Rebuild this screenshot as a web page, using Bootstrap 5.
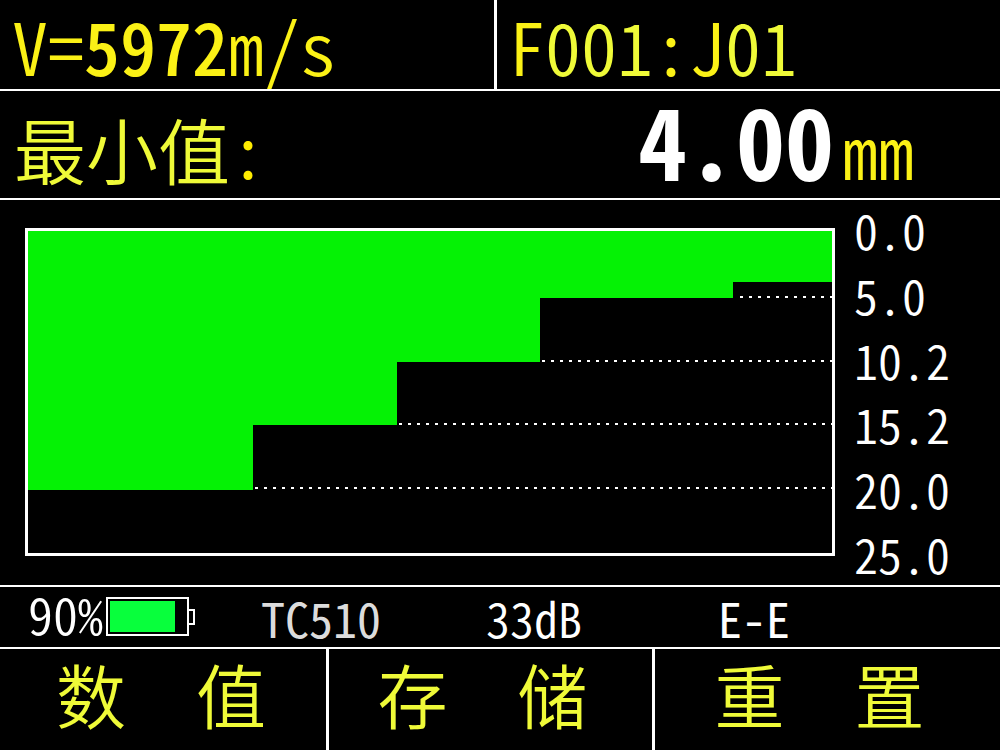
<!DOCTYPE html>
<html lang="zh-CN">
<head>
<meta charset="utf-8">
<meta name="viewport" content="width=device-width, initial-scale=1">
<title>TC510</title>
<link href="https://cdn.jsdelivr.net/npm/bootstrap@5.3.0/dist/css/bootstrap.min.css" rel="stylesheet">
<style>
  body { background: #000; color: #fff; font-family: "Noto Sans CJK SC", sans-serif; font-weight: 350; }
  /* half-width Latin forms give every digit and letter the same advance */
  .mono { font-feature-settings: "hwid" 1; white-space: nowrap; }
  .line-b { border-bottom: 2px solid #fff; }
  .top-row { display: grid; grid-template-columns: 497fr 503fr; }
  .readout { font-size: 72px; line-height: 89px; color: #fbf116; padding-left: 12px; }
  .velocity { border-right: 3px solid #fff; }
  .readout b { font-weight: 500; }
  .lime { color: #effa38; }
  .value-row { padding: 0 86px 0 14px; }
  .value-label { font-size: 72px; line-height: 107px; padding-top: 3px; margin-bottom: -3px; color: #effa38; }
  .value-num { font-size: 98px; line-height: 95px; font-weight: 700; }
  .value-unit { font-size: 72px; line-height: 107px; padding-top: 4px; margin: 0 0 -4px 8px; color: #fbf116; }
  .amber { color: #ffec00; }
  .chart-row { padding: 5px 46px 8px 25px; }
  .plot { border: 3px solid #fff; margin: 23px 0 21px; }
  .plot svg { min-height: 0; }
  .scale { width: 100px; margin-left: 19px; font-size: 48px; line-height: 48px; }
  .status-row { font-size: 48px; line-height: 60px; display: grid; grid-template-columns: 261fr 225fr 232fr 282fr; }
  .power { font-size: 50px; line-height: 52px; padding-left: 28px; }
  .power svg { margin: 10px 0 0 3px; }
  .model { color: #dcdcdc; font-weight: 400; }
  .keys { display: grid; grid-template-columns: 329fr 326fr 345fr; }
  .keys button { background: none; border: 0; border-right: 3px solid #fff; color: #effa38; font-size: 70px; font-weight: 350; line-height: 89px; padding: 0 16px 12px 0; }
  .keys button:first-child { padding-right: 4px; }
  .keys button:last-child { border-right: 0; }
</style>
</head>
<body>
<main class="d-flex flex-column min-vh-100">
  <header class="top-row line-b">
    <div class="velocity readout mono">V=<b>5972</b>m/s</div>
    <div class="readout mono">F<span class="lime">001</span>:J<span class="lime">01</span></div>
  </header>
  <section class="value-row line-b d-flex justify-content-between">
    <div class="value-label mono">最小值<span class="amber">:</span></div>
    <div class="d-flex"><span class="value-num mono">4.00</span><span class="value-unit mono">mm</span></div>
  </section>
  <section class="chart-row line-b d-flex flex-grow-1">
    <div class="plot flex-grow-1 d-flex">
      <svg class="w-100 h-100" viewBox="0 0 804 322" preserveAspectRatio="none" shape-rendering="crispEdges" role="img" aria-label="厚度剖面">
        <g stroke="#fff" stroke-width="2" stroke-dasharray="3 6">
          <path d="M712 66H804M514 130H804M371 193H804M227 257H804"/>
        </g>
        <path fill="#05f205" d="M0 0H804V51H705V67H512V131H369V194H225V259H0Z"/>
      </svg>
    </div>
    <div class="scale mono d-flex flex-column justify-content-between">
      <span>0.0</span><span>5.0</span><span>10.2</span><span>15.2</span><span>20.0</span><span>25.0</span>
    </div>
  </section>
  <section class="status-row line-b mono">
    <div class="power d-flex align-items-start"><span>90%</span>
      <svg width="90" height="40" viewBox="0 0 90 40" role="img" aria-label="电量"><path d="M1 1H82V38H1ZM82 13H88V27H82" fill="none" stroke="#fff" stroke-width="2"/><path d="M4 4H69V35H4Z" fill="#08ff3c"/></svg>
    </div>
    <div class="model">TC510</div>
    <div>33dB</div>
    <div class="fw-normal">E-E</div>
  </section>
  <nav class="keys">
    <button type="button">数　值</button><button type="button">存　储</button><button type="button">重　置</button>
  </nav>
</main>
<script src="https://cdn.jsdelivr.net/npm/bootstrap@5.3.0/dist/js/bootstrap.bundle.min.js"></script>
</body>
</html>
